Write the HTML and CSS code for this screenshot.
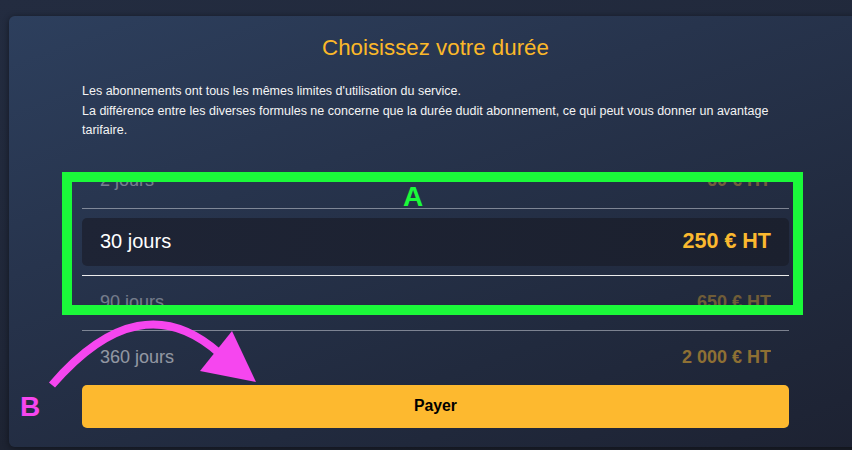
FILE: index.html
```html
<!DOCTYPE html>
<html lang="fr">
<head>
<meta charset="utf-8">
<title>Choisissez votre durée</title>
<link rel="stylesheet" href="styles.css">
</head>
<body>
<div class="page">
  <section class="panel">
    <h1 class="title">Choisissez votre durée</h1>
    <p class="intro">Les abonnements ont tous les mêmes limites d'utilisation du service.<br>La différence entre les diverses formules ne concerne que la durée dudit abonnement, ce qui peut vous donner un avantage tarifaire.</p>
    <ul class="durations">
      <li class="row row-first row-far"><span class="label">2 jours</span><span class="price">60 € HT</span></li>
      <li class="selected-wrap">
        <div class="row selected"><span class="label">30 jours</span><span class="price">250 € HT</span></div>
      </li>
      <li class="row row-far"><span class="label">90 jours</span><span class="price">650 € HT</span></li>
      <li class="row row-last row-near"><span class="label">360 jours</span><span class="price">2&nbsp;000 € HT</span></li>
    </ul>
    <button class="pay" type="button">Payer</button>
  </section>

  <div class="mark-box"></div>
  <span class="mark-letter mark-a">A</span>
  <svg class="mark-arrow" width="852" height="450" viewBox="0 0 852 450" aria-hidden="true">
    <path d="M52 385 Q140 283 219 353" fill="none" stroke="#f646ef" stroke-width="8"/>
    <polygon points="232,331 200,371 256,382" fill="#f646ef"/>
  </svg>
  <span class="mark-letter mark-b">B</span>
</div>
</body>
</html>
```

FILE: styles.css
```css
html, body {
  margin: 0;
  padding: 0;
  width: 852px;
  height: 450px;
  overflow: hidden;
}

body {
  background: linear-gradient(170deg, #232c40 0%, #1f2637 60%, #1a1e29 100%);
  font-family: "Liberation Sans", Arial, Helvetica, sans-serif;
  color: #f2f2f2;
}

.page {
  position: relative;
  width: 852px;
  height: 450px;
  padding: 16px 0 0 9px;
  box-sizing: border-box;
}

.panel {
  width: 853px;
  box-sizing: border-box;
  padding: 19px 73px 19px;
  border-radius: 6px;
  background: linear-gradient(160deg, #2d3f5d 0%, #27344d 35%, #212a3e 70%, #1d2232 100%);
  box-shadow: 0 1px 6px rgba(0, 0, 0, 0.45);
}

.title {
  margin: 0;
  font-size: 22.3px;
  line-height: 26px;
  font-weight: 400;
  text-align: center;
  color: #fbb829;
}

.intro {
  margin: 21px 0 12px;
  font-size: 12.5px;
  line-height: 19.5px;
  color: #f4f4f4;
}

.durations {
  list-style: none;
  margin: 0;
  padding: 0;
}

.row {
  display: flex;
  align-items: center;
  justify-content: space-between;
  padding: 0 18px;
  height: 54px;
  border-bottom: 1px solid rgba(200, 204, 214, 0.55);
}

.row-first {
  height: 55px;
}

.row-last {
  border-bottom: none;
}

.label {
  font-size: 18px;
  color: #ffffff;
}

.price {
  font-size: 18px;
  font-weight: 700;
  color: #fbb92f;
}

.row-far .label,
.row-far .price {
  opacity: 0.36;
}

.row-near .label,
.row-near .price {
  opacity: 0.5;
}

.selected-wrap {
  padding: 9px 0;
  border-bottom: 1px solid #ececec;
}

.selected-wrap .row.selected {
  height: 48px;
  border-bottom: none;
  border-radius: 5px;
  background: linear-gradient(100deg, #1e2435 0%, #1b202e 100%);
}

.selected .label {
  font-size: 20px;
}

.selected .price {
  font-size: 21.5px;
}

.pay {
  display: block;
  width: 100%;
  height: 43px;
  margin: 0;
  border: none;
  border-radius: 5px;
  background: #fdb92f;
  color: #000000;
  font-family: "Liberation Sans", Arial, Helvetica, sans-serif;
  font-size: 15.8px;
  font-weight: 700;
  cursor: pointer;
}

/* annotation overlays */
.mark-box {
  position: absolute;
  left: 62px;
  top: 172px;
  width: 741px;
  height: 143px;
  box-sizing: border-box;
  border: 10px solid #1bf93a;
  pointer-events: none;
}

.mark-letter {
  position: absolute;
  font-family: "Liberation Sans", Arial, sans-serif;
  font-weight: 700;
  font-size: 28px;
  line-height: 28px;
}

.mark-a {
  left: 403px;
  top: 183px;
  color: #1bf93a;
}

.mark-b {
  left: 20px;
  top: 393px;
  color: #f646ef;
}

.mark-arrow {
  position: absolute;
  left: 0;
  top: 0;
  pointer-events: none;
}
```
